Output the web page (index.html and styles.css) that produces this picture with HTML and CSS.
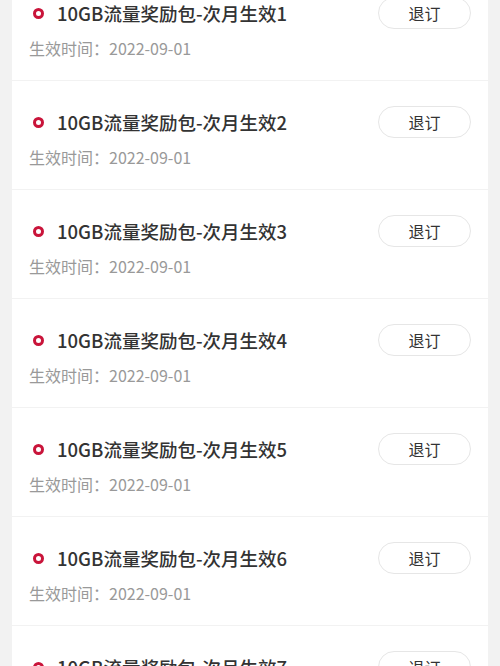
FILE: index.html
```html
<!DOCTYPE html>
<html lang="zh-CN">
<head>
    <meta charset="UTF-8">
    <meta name="viewport" content="width=device-width, initial-scale=1.0">
    <title>流量包</title>
    <link rel="stylesheet" href="styles.css">
</head>
<body>
    <div class="list">
        <div class="item">
            <div class="item-row">
                <span class="dot"></span>
                <span class="item-title">10GB流量奖励包-次月生效1</span>
                <button class="cancel-button">退订</button>
            </div>
            <div class="item-date">生效时间：2022-09-01</div>
        </div>
        <div class="item">
            <div class="item-row">
                <span class="dot"></span>
                <span class="item-title">10GB流量奖励包-次月生效2</span>
                <button class="cancel-button">退订</button>
            </div>
            <div class="item-date">生效时间：2022-09-01</div>
        </div>
        <div class="item">
            <div class="item-row">
                <span class="dot"></span>
                <span class="item-title">10GB流量奖励包-次月生效3</span>
                <button class="cancel-button">退订</button>
            </div>
            <div class="item-date">生效时间：2022-09-01</div>
        </div>
        <div class="item">
            <div class="item-row">
                <span class="dot"></span>
                <span class="item-title">10GB流量奖励包-次月生效4</span>
                <button class="cancel-button">退订</button>
            </div>
            <div class="item-date">生效时间：2022-09-01</div>
        </div>
        <div class="item">
            <div class="item-row">
                <span class="dot"></span>
                <span class="item-title">10GB流量奖励包-次月生效5</span>
                <button class="cancel-button">退订</button>
            </div>
            <div class="item-date">生效时间：2022-09-01</div>
        </div>
        <div class="item">
            <div class="item-row">
                <span class="dot"></span>
                <span class="item-title">10GB流量奖励包-次月生效6</span>
                <button class="cancel-button">退订</button>
            </div>
            <div class="item-date">生效时间：2022-09-01</div>
        </div>
        <div class="item">
            <div class="item-row">
                <span class="dot"></span>
                <span class="item-title">10GB流量奖励包-次月生效7</span>
                <button class="cancel-button">退订</button>
            </div>
            <div class="item-date">生效时间：2022-09-01</div>
        </div>
    </div>
</body>
</html>
```

FILE: styles.css
```css
body {
    margin: 0;
    background-color: #f2f2f2;
    font-family: "Noto Sans CJK SC", "Noto Sans", sans-serif;
    overflow: hidden;
}
.list {
    margin: -28px 12px 0;
}
.item {
    background-color: #ffffff;
    height: 108px;
    padding: 25px 17px 0;
    box-sizing: border-box;
}
.item + .item {
    height: 109px;
    border-top: 1px solid #f2f2f2;
}
.item-row {
    display: flex;
    align-items: center;
    height: 32px;
}
.dot {
    width: 11px;
    height: 11px;
    margin-left: 4px;
    border: 3px solid #c9143a;
    border-radius: 50%;
    box-sizing: border-box;
    flex-shrink: 0;
}
.item-title {
    flex: 1;
    margin-left: 13px;
    font-size: 18.5px;
    font-weight: 500;
    color: #333333;
}
.cancel-button {
    width: 93px;
    height: 32px;
    border: 1px solid #e6e6e6;
    border-radius: 16px;
    background-color: #ffffff;
    font-family: inherit;
    font-size: 16px;
    color: #333333;
    padding: 0;
}
.item-date {
    margin-top: 9px;
    line-height: 20px;
    font-size: 16px;
    color: #999999;
}
```
